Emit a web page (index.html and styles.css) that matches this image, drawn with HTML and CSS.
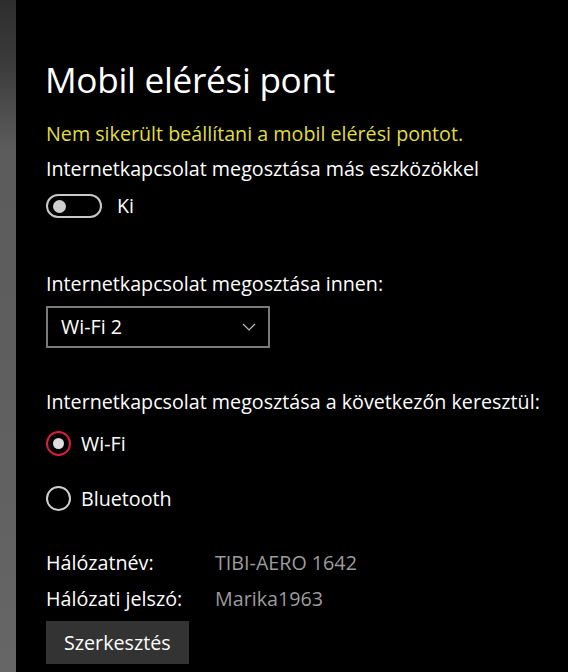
FILE: index.html
```html
<!DOCTYPE html>
<html lang="hu">
<head>
    <meta charset="UTF-8">
    <meta name="viewport" content="width=device-width, initial-scale=1.0">
    <title>Mobil elérési pont</title>
    <link rel="stylesheet" href="styles.css">
</head>
<body>
    <div class="side-strip"></div>

    <main class="settings-page">
        <h1 class="page-title">Mobil elérési pont</h1>

        <div class="warning-text">Nem sikerült beállítani a mobil elérési pontot.</div>
        <div class="setting-label">Internetkapcsolat megosztása más eszközökkel</div>

        <div class="toggle-row">
            <span class="toggle"><span class="toggle-knob"></span></span>
            <span class="toggle-state">Ki</span>
        </div>

        <div class="setting-label share-from">Internetkapcsolat megosztása innen:</div>
        <div class="dropdown">
            <span>Wi-Fi 2</span>
            <svg class="chevron" width="14" height="8" viewBox="0 0 14 8">
                <polyline points="1,1 7,7 13,1" fill="none" stroke="#bdbdbd" stroke-width="1.2"/>
            </svg>
        </div>

        <div class="setting-label share-over">Internetkapcsolat megosztása a következőn keresztül:</div>
        <div class="radio-row">
            <span class="radio checked"><span class="radio-dot"></span></span>
            <span>Wi-Fi</span>
        </div>
        <div class="radio-row second">
            <span class="radio"></span>
            <span>Bluetooth</span>
        </div>

        <div class="info-grid">
            <span class="info-name">Hálózatnév:</span>
            <span class="info-value">TIBI-AERO 1642</span>
            <span class="info-name">Hálózati jelszó:</span>
            <span class="info-value">Marika1963</span>
        </div>

        <button class="edit-button">Szerkesztés</button>
    </main>
</body>
</html>
```

FILE: styles.css
```css
* {
    margin: 0;
    padding: 0;
    box-sizing: border-box;
}

body {
    font-family: 'Open Sans', 'Noto Sans', sans-serif;
    font-size: 19.7px;
    line-height: 24px;
    background-color: #000;
    color: #fff;
    height: 100vh;
    display: flex;
    overflow: hidden;
}

/* grey edge of the window behind */
.side-strip {
    width: 16px;
    flex-shrink: 0;
    background: linear-gradient(to bottom, #2e2e2e 0px, #3a3a3a 60px, #5c5c5c 150px, #5e5e5e 350px, #666 672px);
}

.settings-page {
    padding-left: 30px;
    display: flex;
    flex-direction: column;
    align-items: flex-start;
}

.page-title {
    font-size: 35.2px;
    line-height: 44px;
    font-weight: 400;
    margin-top: 57px;
    margin-left: -1px;
    letter-spacing: -0.3px;
}

.warning-text {
    color: #e0de3e;
    margin-top: 21px;
}

.setting-label {
    margin-top: 11px;
}

/* toggle switch */
.toggle-row {
    display: flex;
    align-items: center;
    gap: 15px;
    height: 24px;
    margin-top: 13px;
}

.toggle {
    width: 56px;
    height: 24px;
    border: 2px solid #c8c8c8;
    border-radius: 12px;
    display: flex;
    align-items: center;
    padding-left: 5px;
}

.toggle-knob {
    width: 13px;
    height: 13px;
    border-radius: 50%;
    background-color: #cfcfcf;
}

.share-from {
    margin-top: 54px;
}

/* combo box */
.dropdown {
    width: 224px;
    height: 42px;
    margin-top: 10px;
    border: 2px solid #7a7a7a;
    display: flex;
    align-items: center;
    justify-content: space-between;
    padding: 0 12px 0 13px;
}

.chevron {
    display: block;
}

.share-over {
    margin-top: 42px;
}

/* radio buttons */
.radio-row {
    display: flex;
    align-items: center;
    gap: 10px;
    height: 25px;
    margin-top: 17px;
}

.radio-row.second {
    margin-top: 30px;
}

.radio {
    width: 25px;
    height: 25px;
    border: 2.5px solid #cfcfcf;
    border-radius: 50%;
    display: flex;
    align-items: center;
    justify-content: center;
}

.radio.checked {
    border-color: #dc1e3c;
}

.radio-dot {
    width: 11px;
    height: 11px;
    border-radius: 50%;
    background-color: #dedede;
}

/* network details */
.info-grid {
    display: grid;
    grid-template-columns: 169px auto;
    row-gap: 12px;
    margin-top: 40px;
}

.info-value {
    color: #9c9c9c;
}

.edit-button {
    margin-top: 10px;
    height: 43px;
    padding: 0 18px;
    background-color: #333;
    border: none;
    color: #fff;
    font-family: inherit;
    font-size: 19.7px;
    line-height: 24px;
}
```
